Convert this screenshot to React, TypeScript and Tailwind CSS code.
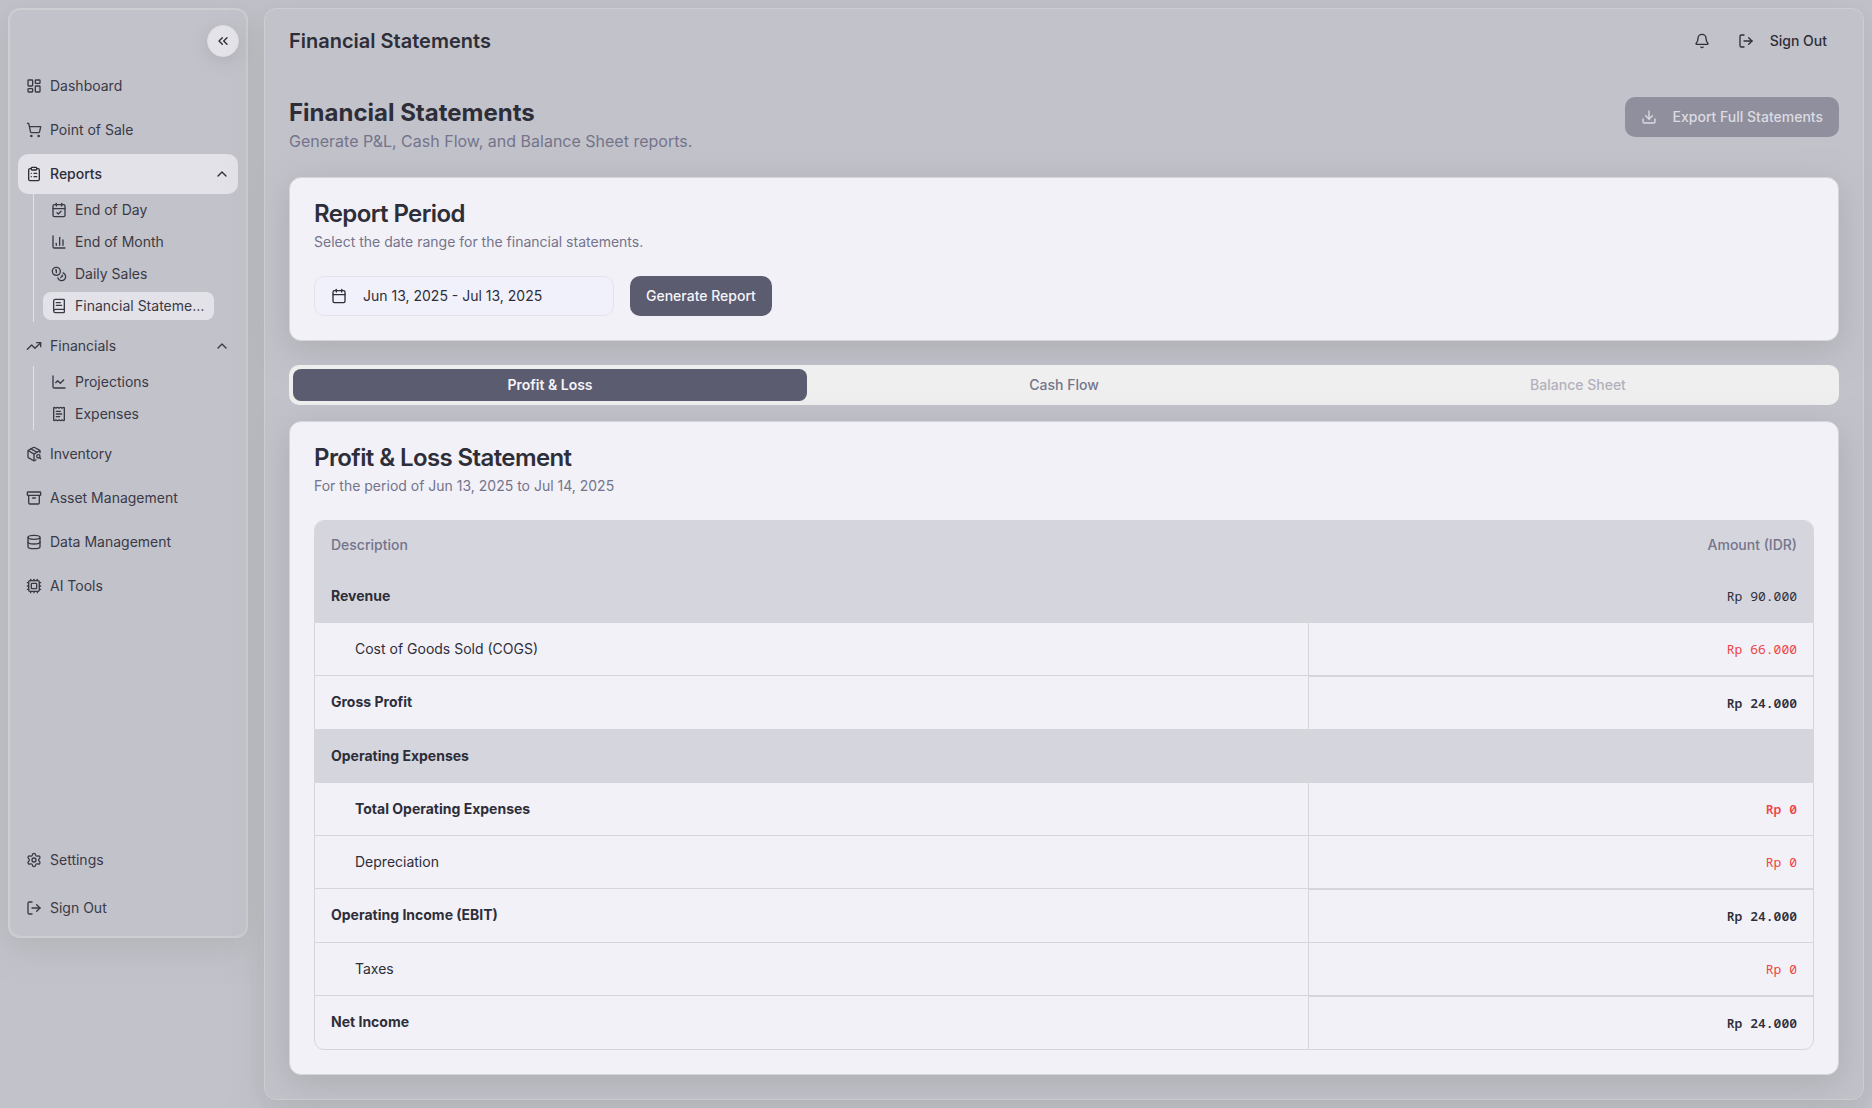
import {
  Archive, Bell, BookText, Calendar, CalendarCheck, ChartColumn, ChartLine, ChevronUp, ChevronsLeft,
  ClipboardList, Coins, Cpu, Database, Download, LayoutDashboard, LogOut, PackageSearch, ReceiptText,
  Settings, ShoppingCart, TrendingUp, type LucideIcon,
} from "lucide-react";

type Item = { label: string; icon: LucideIcon; active?: boolean; children?: Item[] };

const nav: Item[] = [
  { label: "Dashboard", icon: LayoutDashboard },
  { label: "Point of Sale", icon: ShoppingCart },
  {
    label: "Reports", icon: ClipboardList, active: true,
    children: [
      { label: "End of Day", icon: CalendarCheck },
      { label: "End of Month", icon: ChartColumn },
      { label: "Daily Sales", icon: Coins },
      { label: "Financial Statements", icon: BookText, active: true },
    ],
  },
  {
    label: "Financials", icon: TrendingUp,
    children: [
      { label: "Projections", icon: ChartLine },
      { label: "Expenses", icon: ReceiptText },
    ],
  },
  { label: "Inventory", icon: PackageSearch },
  { label: "Asset Management", icon: Archive },
  { label: "Data Management", icon: Database },
  { label: "AI Tools", icon: Cpu },
];

type Row = { label: string; amount: string; kind?: "section" | "total"; indent?: boolean; bold?: boolean; red?: boolean };

const rows: Row[] = [
  { label: "Revenue", amount: "Rp 90.000", kind: "section" },
  { label: "Cost of Goods Sold (COGS)", amount: "Rp 66.000", indent: true, red: true },
  { label: "Gross Profit", amount: "Rp 24.000", kind: "total" },
  { label: "Operating Expenses", amount: "", kind: "section" },
  { label: "Total Operating Expenses", amount: "Rp 0", indent: true, bold: true, red: true },
  { label: "Depreciation", amount: "Rp 0", indent: true, red: true },
  { label: "Operating Income (EBIT)", amount: "Rp 24.000", kind: "total" },
  { label: "Taxes", amount: "Rp 0", indent: true, red: true },
  { label: "Net Income", amount: "Rp 24.000", kind: "total" },
];

function NavItem({ item }: { item: Item }) {
  const Icon = item.icon;
  const state = item.active ? "bg-[#e3e2e8] font-medium text-[#2e2e38]" : "text-[#3a3a46]";
  const content = (
    <>
      <Icon className="size-4 shrink-0" />
      <span className="flex-1 truncate text-left">{item.label}</span>
    </>
  );
  if (!item.children) {
    return (
      <li>
        <a href="#" className={"flex h-10 items-center gap-2 rounded-[10px] p-2 " + state}>{content}</a>
      </li>
    );
  }
  return (
    <li>
      <button type="button" aria-expanded="true" className={"flex h-10 w-full items-center gap-2 rounded-[10px] p-2 " + state}>
        {content}
        <ChevronUp className="size-4 shrink-0" />
      </button>
      <ul className="mr-3.5 ml-[15px] flex flex-col gap-1 border-l border-[#e3e2e8] py-0.5 pr-2.5 pl-[9px]">
        {item.children.map((child) => {
          const ChildIcon = child.icon;
          return (
            <li key={child.label}>
              <a href="#" className={"flex h-7 items-center gap-2 rounded-lg px-2 text-[#3a3a46] " + (child.active ? "bg-[#e3e2e8]" : "")}>
                <ChildIcon className="size-4 shrink-0" />
                <span className="truncate">{child.label}</span>
              </a>
            </li>
          );
        })}
      </ul>
    </li>
  );
}

function Sidebar() {
  return (
    <aside className="flex min-h-[930px] w-60 shrink-0 flex-col self-start rounded-xl border-2 border-[#cdcdd2] bg-[#c2c2cb] shadow-[0_8px_32px_rgba(160,165,160,0.5)]">
      <div className="flex h-12 items-end justify-end pr-[7px] pb-px">
        <button type="button" aria-label="Collapse sidebar" className="flex size-8 items-center justify-center rounded-full border border-[#dddde2] bg-[#e3e3e9] text-[#2e2e38] shadow-[0_4px_16px_rgba(150,155,150,0.4)]">
          <ChevronsLeft className="size-4" />
        </button>
      </div>
      <nav className="flex flex-1 flex-col justify-between p-2 text-sm">
        <ul className="flex flex-col gap-1">
          {nav.map((item) => <NavItem key={item.label} item={item} />)}
        </ul>
        <ul className="flex flex-col gap-2">
          <NavItem item={{ label: "Settings", icon: Settings }} />
          <NavItem item={{ label: "Sign Out", icon: LogOut }} />
        </ul>
      </nav>
    </aside>
  );
}

const cardClass = "rounded-xl border border-[#d4d4da] bg-[#f2f1f8] p-6 shadow-[0_8px_32px_rgba(150,155,150,0.5)]";

function CardHeading({ title, text }: { title: string; text: string }) {
  return (
    <div className="mb-6 flex flex-col gap-1.5">
      <h3 className="text-2xl leading-6 font-semibold tracking-tight text-[#2e2e38]">{title}</h3>
      <p className="text-sm text-[#74748a]">{text}</p>
    </div>
  );
}

function StatementTable() {
  return (
    <div className="overflow-hidden rounded-[10px] border border-[#d5d5da]">
      <table className="w-full border-collapse text-sm text-[#2e2e38]">
        <colgroup>
          <col className="w-[66.3%]" />
          <col />
        </colgroup>
        <thead>
          <tr className="border-b border-[#d5d6da] bg-[#d5d5de] text-[#74748a]">
            <th scope="col" className="h-12 border-r border-[#d5d6da] px-4 text-left font-medium">Description</th>
            <th scope="col" className="h-12 px-4 text-right font-medium">Amount (IDR)</th>
          </tr>
        </thead>
        <tbody>
          {rows.map((row) => (
            <tr key={row.label} className={"border-b border-[#d5d6da] last:border-b-0 " + (row.kind === "section" ? "bg-[#d5d5de]" : "")}>
              <td className={"border-r border-[#d5d6da] p-4 " + (row.indent ? "pl-10 " : "") + (row.kind || row.bold ? "font-bold" : "")}>
                {row.label}
              </td>
              <td className={"p-4 text-right font-['Noto_Sans_Mono','DejaVu_Sans_Mono',monospace] text-[13px] leading-5 " + (row.kind === "total" ? "border-t-2 border-[#d5d6da] " : "") + (row.kind === "total" || row.bold ? "font-semibold " : "") + (row.red ? "text-[#ef4444]" : "")}>
                {row.amount}
              </td>
            </tr>
          ))}
        </tbody>
      </table>
    </div>
  );
}

export default function App() {
  return (
    <div className="flex min-h-screen gap-4 bg-[#c2c2cb] p-2 font-['Inter',sans-serif] text-[#2e2e38]">
      <Sidebar />
      <main className="min-w-0 flex-1 rounded-xl border border-[#cdcdd2] bg-[#c2c2cb] shadow-[0_8px_32px_rgba(160,165,160,0.5)]">
        <header className="flex h-16 items-center justify-between px-6">
          <h1 className="text-xl font-semibold">Financial Statements</h1>
          <div className="flex items-center gap-2">
            <button type="button" aria-label="Notifications" className="flex size-8 items-center justify-center">
              <Bell className="size-4" />
            </button>
            <button type="button" className="flex h-9 items-center gap-4 px-3 text-sm font-medium">
              <LogOut className="size-4" />
              Sign Out
            </button>
          </div>
        </header>
        <div className="p-6">
          <div className="mb-6 flex items-start justify-between">
            <div>
              <h2 className="text-2xl font-bold">Financial Statements</h2>
              <p className="text-base text-[#74748a]">Generate P&amp;L, Cash Flow, and Balance Sheet reports.</p>
            </div>
            <button type="button" disabled className="flex h-10 items-center gap-4 rounded-[10px] bg-[#8f8f9e] px-4 text-sm font-medium text-[#dcdce2]">
              <Download className="size-4" />
              Export Full Statements
            </button>
          </div>
          <section className={cardClass}>
            <CardHeading title="Report Period" text="Select the date range for the financial statements." />
            <div className="flex gap-4">
              <button type="button" className="flex h-10 w-[300px] items-center gap-4 rounded-[10px] border border-[#e3e3e8] bg-[#f1f1fc] px-4 text-sm">
                <Calendar className="size-4" />
                Jun 13, 2025 - Jul 13, 2025
              </button>
              <button type="button" className="h-10 rounded-[10px] bg-[#5c5c70] px-4 text-sm font-medium text-[#f5f5fa]">
                Generate Report
              </button>
            </div>
          </section>
          <div role="tablist" className="mt-6 mb-4 grid h-10 grid-cols-3 rounded-[10px] bg-[#efefef] p-1 text-sm font-medium text-[#74748a]">
            <button type="button" role="tab" aria-selected="true" className="rounded-lg bg-[#5c5c70] font-semibold text-[#f5f5fa]">Profit &amp; Loss</button>
            <button type="button" role="tab" aria-selected="false">Cash Flow</button>
            <button type="button" role="tab" aria-selected="false" disabled className="opacity-50">Balance Sheet</button>
          </div>
          <section className={cardClass}>
            <CardHeading title="Profit & Loss Statement" text="For the period of Jun 13, 2025 to Jul 14, 2025" />
            <StatementTable />
          </section>
        </div>
      </main>
    </div>
  );
}
